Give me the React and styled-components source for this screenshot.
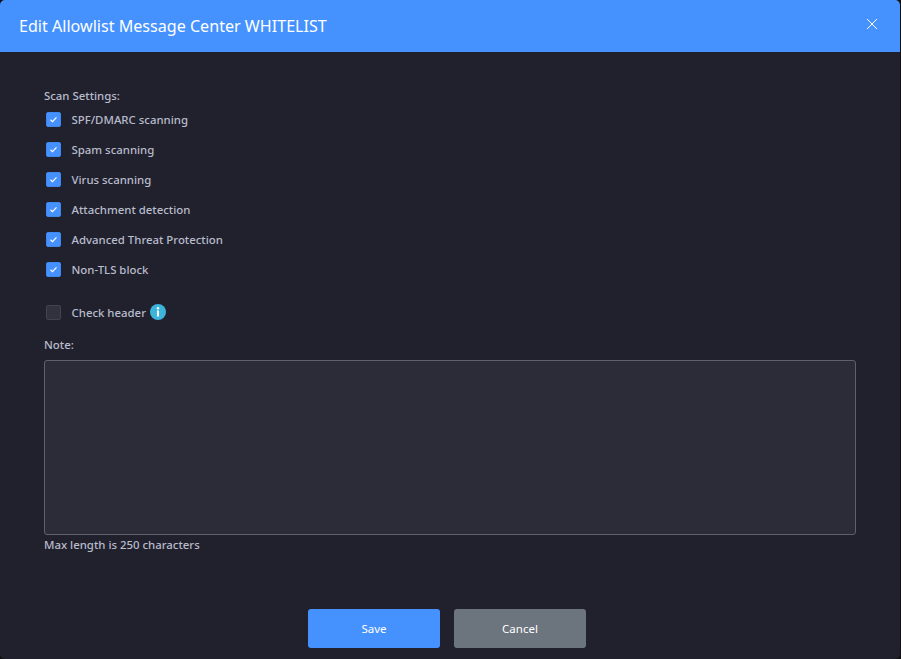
import React from 'react';
import styled, { createGlobalStyle } from 'styled-components';

const Global = createGlobalStyle`
  html, body { margin: 0; padding: 0; background: #111; }
  body { font-family: "Noto Sans", sans-serif; }
  * { box-sizing: border-box; }
`;

const Modal = styled.div`
  width: 900px;
  height: 659px;
  background: #21212e;
  border-radius: 5px;
  overflow: hidden;
  display: flex;
  flex-direction: column;
`;

const Header = styled.header`
  height: 52px;
  flex: none;
  background: #4592ff;
  display: flex;
  align-items: center;
  justify-content: space-between;
  padding: 0 22px 0 19px;
  color: #fff;
`;

const Title = styled.h1`
  margin: 0;
  font-size: 16.1px;
  font-weight: 400;
  line-height: 22px;
`;

const Close = styled.button`
  border: 0;
  padding: 0;
  background: none;
  width: 12px;
  height: 12px;
  margin-bottom: 5px;
  display: flex;
  color: #fff;
`;

const Body = styled.div`
  flex: 1;
  padding: 36px 45px 0 44px;
  display: flex;
  flex-direction: column;
`;

const SectionLabel = styled.div`
  font-size: 11.4px;
  font-weight: 500;
  line-height: 15px;
  color: #b8bccb;
`;

const Rows = styled.div`
  margin-top: 8px;
  display: flex;
  flex-direction: column;
  gap: 14px;
`;

const Row = styled.label`
  display: flex;
  align-items: center;
  height: 16px;
  padding-left: 2px;
  font-size: 11.4px;
  font-weight: 500;
  color: #b8bccb;
`;

const Box = styled.span`
  width: 15px;
  height: 15px;
  flex: none;
  margin-right: 10.5px;
  border-radius: 2px;
  display: flex;
  align-items: center;
  justify-content: center;
  background: ${p => (p.$checked ? '#4592ff' : '#32323f')};
  border: 1px solid ${p => (p.$checked ? '#4088ee' : '#434350')};
`;

const HeaderRow = styled(Row)`
  margin-top: 27px;
`;

const Info = styled.span`
  width: 16px;
  height: 16px;
  margin-left: 4px;
  display: flex;
`;

const NoteLabel = styled(SectionLabel)`
  margin-top: 17px;
`;

const Note = styled.textarea`
  margin-top: 8px;
  width: 812px;
  height: 175px;
  flex: none;
  display: block;
  resize: none;
  background: #2c2c39;
  border: 1px solid #60606b;
  border-radius: 3px;
  outline: none;
`;

const Hint = styled(SectionLabel)`
  margin-top: 2px;
`;

const Footer = styled.footer`
  flex: none;
  height: 50px;
  display: flex;
  justify-content: center;
  align-items: flex-start;
  gap: 14px;
  padding-right: 6px;
`;

const Button = styled.button`
  width: 132px;
  height: 39px;
  border: 0;
  border-radius: 3px;
  color: #fff;
  font-family: inherit;
  font-size: 11.5px;
  font-weight: 400;
  background: ${p => (p.$primary ? '#4592ff' : '#6c757d')};
`;

const Check = () => (
  <svg width="9" height="9" viewBox="0 0 9 9" fill="none">
    <path d="M1.5 4.8 L3.5 6.6 L7.5 2.4" stroke="#fff" strokeWidth="1.2" />
  </svg>
);

const items = [
  'SPF/DMARC scanning',
  'Spam scanning',
  'Virus scanning',
  'Attachment detection',
  'Advanced Threat Protection',
  'Non-TLS block',
];

export default function App() {
  return (
    <>
      <Global />
      <Modal>
        <Header>
          <Title>Edit Allowlist Message Center WHITELIST</Title>
          <Close aria-label="Close">
            <svg width="12" height="12" viewBox="0 0 12 12" fill="none">
              <path d="M1 1 L11 11 M11 1 L1 11" stroke="#fff" strokeWidth="1" />
            </svg>
          </Close>
        </Header>
        <Body>
          <SectionLabel>Scan Settings:</SectionLabel>
          <Rows>
            {items.map(t => (
              <Row key={t}>
                <Box $checked><Check /></Box>
                {t}
              </Row>
            ))}
          </Rows>
          <HeaderRow>
            <Box />
            Check header
            <Info>
              <svg width="16" height="16" viewBox="0 0 16 16">
                <circle cx="8" cy="8" r="8" fill="#3cb4dc" />
                <circle cx="8" cy="4.3" r="1.2" fill="#fff" />
                <rect x="7" y="6.5" width="2" height="6" fill="#fff" />
              </svg>
            </Info>
          </HeaderRow>
          <NoteLabel>Note:</NoteLabel>
          <Note />
          <Hint>Max length is 250 characters</Hint>
        </Body>
        <Footer>
          <Button $primary>Save</Button>
          <Button>Cancel</Button>
        </Footer>
      </Modal>
    </>
  );
}
